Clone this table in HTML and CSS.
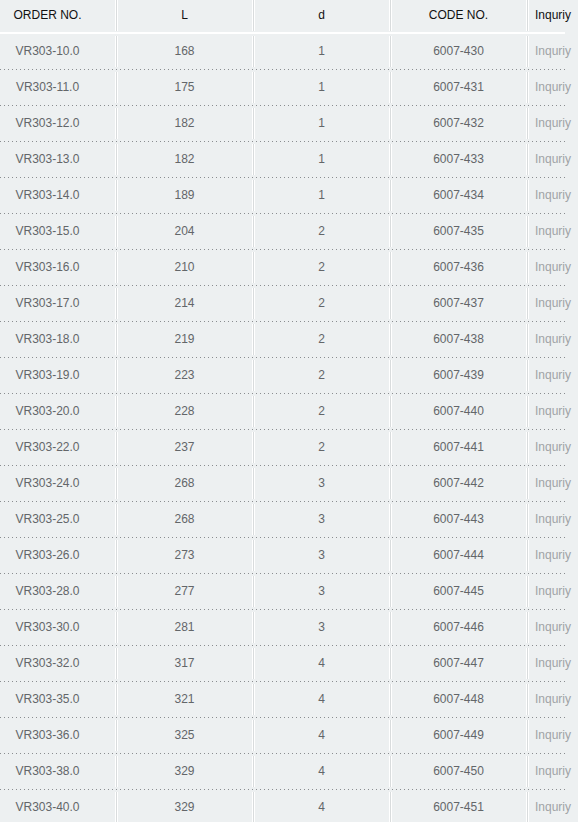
FILE: index.html
```html
<!DOCTYPE html>
<html>
<head>
<meta charset="utf-8">
<link rel="stylesheet" href="styles.css">
</head>
<body>
<div class="wrap">
  <div class="tbl">
    <div class="row head">
      <div class="c">ORDER NO.</div>
      <div class="c sep">L</div>
      <div class="c sep">d</div>
      <div class="c sep">CODE NO.</div>
      <div class="c sep inq">Inquriy</div>
    </div>
    <div class="row"><div class="c">VR303-10.0</div><div class="c sep">168</div><div class="c sep">1</div><div class="c sep">6007-430</div><div class="c sep inq">Inquriy</div></div>
    <div class="row"><div class="c">VR303-11.0</div><div class="c sep">175</div><div class="c sep">1</div><div class="c sep">6007-431</div><div class="c sep inq">Inquriy</div></div>
    <div class="row"><div class="c">VR303-12.0</div><div class="c sep">182</div><div class="c sep">1</div><div class="c sep">6007-432</div><div class="c sep inq">Inquriy</div></div>
    <div class="row"><div class="c">VR303-13.0</div><div class="c sep">182</div><div class="c sep">1</div><div class="c sep">6007-433</div><div class="c sep inq">Inquriy</div></div>
    <div class="row"><div class="c">VR303-14.0</div><div class="c sep">189</div><div class="c sep">1</div><div class="c sep">6007-434</div><div class="c sep inq">Inquriy</div></div>
    <div class="row"><div class="c">VR303-15.0</div><div class="c sep">204</div><div class="c sep">2</div><div class="c sep">6007-435</div><div class="c sep inq">Inquriy</div></div>
    <div class="row"><div class="c">VR303-16.0</div><div class="c sep">210</div><div class="c sep">2</div><div class="c sep">6007-436</div><div class="c sep inq">Inquriy</div></div>
    <div class="row"><div class="c">VR303-17.0</div><div class="c sep">214</div><div class="c sep">2</div><div class="c sep">6007-437</div><div class="c sep inq">Inquriy</div></div>
    <div class="row"><div class="c">VR303-18.0</div><div class="c sep">219</div><div class="c sep">2</div><div class="c sep">6007-438</div><div class="c sep inq">Inquriy</div></div>
    <div class="row"><div class="c">VR303-19.0</div><div class="c sep">223</div><div class="c sep">2</div><div class="c sep">6007-439</div><div class="c sep inq">Inquriy</div></div>
    <div class="row"><div class="c">VR303-20.0</div><div class="c sep">228</div><div class="c sep">2</div><div class="c sep">6007-440</div><div class="c sep inq">Inquriy</div></div>
    <div class="row"><div class="c">VR303-22.0</div><div class="c sep">237</div><div class="c sep">2</div><div class="c sep">6007-441</div><div class="c sep inq">Inquriy</div></div>
    <div class="row"><div class="c">VR303-24.0</div><div class="c sep">268</div><div class="c sep">3</div><div class="c sep">6007-442</div><div class="c sep inq">Inquriy</div></div>
    <div class="row"><div class="c">VR303-25.0</div><div class="c sep">268</div><div class="c sep">3</div><div class="c sep">6007-443</div><div class="c sep inq">Inquriy</div></div>
    <div class="row"><div class="c">VR303-26.0</div><div class="c sep">273</div><div class="c sep">3</div><div class="c sep">6007-444</div><div class="c sep inq">Inquriy</div></div>
    <div class="row"><div class="c">VR303-28.0</div><div class="c sep">277</div><div class="c sep">3</div><div class="c sep">6007-445</div><div class="c sep inq">Inquriy</div></div>
    <div class="row"><div class="c">VR303-30.0</div><div class="c sep">281</div><div class="c sep">3</div><div class="c sep">6007-446</div><div class="c sep inq">Inquriy</div></div>
    <div class="row"><div class="c">VR303-32.0</div><div class="c sep">317</div><div class="c sep">4</div><div class="c sep">6007-447</div><div class="c sep inq">Inquriy</div></div>
    <div class="row"><div class="c">VR303-35.0</div><div class="c sep">321</div><div class="c sep">4</div><div class="c sep">6007-448</div><div class="c sep inq">Inquriy</div></div>
    <div class="row"><div class="c">VR303-36.0</div><div class="c sep">325</div><div class="c sep">4</div><div class="c sep">6007-449</div><div class="c sep inq">Inquriy</div></div>
    <div class="row"><div class="c">VR303-38.0</div><div class="c sep">329</div><div class="c sep">4</div><div class="c sep">6007-450</div><div class="c sep inq">Inquriy</div></div>
    <div class="row"><div class="c">VR303-40.0</div><div class="c sep">329</div><div class="c sep">4</div><div class="c sep">6007-451</div><div class="c sep inq">Inquriy</div></div>
  </div>
</div>
</body>
</html>
```

FILE: styles.css
```css
html, body {
  margin: 0;
  padding: 0;
  background: #edf0f1;
  overflow: hidden;
}
body {
  font-family: "Liberation Sans", Arial, sans-serif;
  font-size: 12px;
  color: #636669;
}
.wrap {
  width: 578px;
  overflow: hidden;
}
.tbl {
  width: 586px;
  margin-left: -21px;
}
.row {
  display: grid;
  grid-template-columns: 137px 137px 137px 137px 38px;
  height: 35px;
  position: relative;
}
.row::after {
  content: "";
  position: absolute;
  left: 0;
  right: 0;
  bottom: -1px;
  height: 1px;
  background-image: linear-gradient(to right, #8a8d90 0 1px, transparent 1px);
  background-size: 4px 1px;
  background-position: 1px 0;
}
.row.head {
  height: 32px;
  border-bottom: 2px solid #fff;
  color: #111;
}
.row.head::after {
  display: none;
}
.row + .row {
  margin-bottom: 1px;
}
.c {
  position: relative;
  display: flex;
  align-items: center;
  justify-content: center;
  white-space: nowrap;
  padding-bottom: 2px;
}
.head .c {
  padding-bottom: 3px;
}
.sep::before {
  content: "";
  position: absolute;
  left: -1px;
  top: 2px;
  bottom: 2px;
  width: 3px;
  background: linear-gradient(to right, #fff 0 1px, #d9dcdd 1px 2px, #fff 2px 3px);
}
.head .sep::before {
  top: 0;
  bottom: 1px;
}
.c.inq {
  justify-content: flex-start;
  padding-left: 8px;
  color: #a0a3a6;
  overflow: visible;
}
.head .c.inq {
  color: #111;
}
```
